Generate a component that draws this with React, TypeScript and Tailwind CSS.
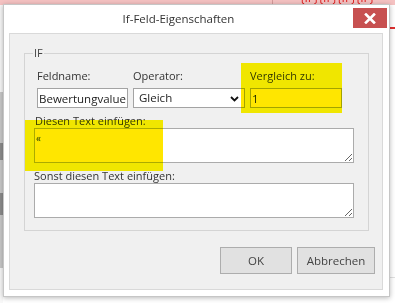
import React from "react";

function Chevron() {
  return (
    <svg width="9" height="6" viewBox="0 0 9 6" className="absolute right-[5px] top-[7px]">
      <path d="M1 1 L4.5 4.5 L8 1" fill="none" stroke="#111" strokeWidth="1.8" />
    </svg>
  );
}

export default function App() {
  return (
    <div className="relative w-[395px] h-[303px] overflow-hidden bg-white font-['Open_Sans','Noto_Sans',sans-serif] text-[#333]">
      {/* background page */}
      <div className="flex flex-col h-full">
        <div className="relative h-[5px] bg-[#f5c2c2]">
          <div className="absolute left-[272px] top-0 w-[1px] h-[5px] bg-[#d49a9a]" />
          <span className="absolute left-[300px] top-[-9px] text-[12px] leading-[14px] text-[#e02020] whitespace-nowrap">
            {"{IF}{IF}{IF}{IF}"}
          </span>
        </div>
        <div className="flex flex-1">
          <div className="w-[3px] flex flex-col">
            <div className="h-[87px] bg-[#f8f8f8]" />
            <div className="h-[51px] bg-[#c9c9c9]" />
            <div className="h-[17px] bg-[#8c8c8c]" />
            <div className="h-[33px] bg-[#c9c9c9]" />
            <div className="h-[22px] bg-[#8c8c8c]" />
            <div className="h-[53px] bg-[#c9c9c9]" />
            <div className="flex-1 bg-[#f8f8f8]" />
          </div>
          <div className="flex-1" />
          <div className="w-[5px] flex flex-col">
            <div className="h-[22px]" />
            <div className="h-[2px] bg-[#e03030]" />
            <div className="h-[248px]" />
            <div className="h-[1px] bg-[#e0e0e0]" />
          </div>
        </div>
      </div>

      {/* dialog */}
      <div className="absolute left-[3px] top-[4px] w-[387px] h-[293px] border border-[#c6c6c6] bg-white shadow-[0_1px_5px_rgba(0,0,0,0.28)] flex flex-col">
        <div className="h-[28px] flex items-start shrink-0">
          <div className="flex-1 h-full flex items-center justify-center text-[11.5px] text-[#333]">
            If-Feld-Eigenschaften
          </div>
          <div className="mt-[3px] mr-[2px] w-[34px] h-[20px] bg-[#c75050] flex items-center justify-center">
            <svg width="12" height="11" viewBox="0 0 12 11">
              <path d="M2 1.5 L10 9.5 M10 1.5 L2 9.5" stroke="white" strokeWidth="2.6" strokeLinecap="square" />
            </svg>
          </div>
        </div>

        <div className="ml-[5px] mr-[6px] h-[257px] border border-[#d9d9d9] bg-[#f0f0f0] flex flex-col shrink-0">
          {/* fieldset */}
          <div className="relative mt-[19px] ml-[14px] w-[345px] border border-[#d4d4d4] pt-[9px] pb-[12px] text-[11px]">
            <span className="absolute left-[8px] top-[-9px] px-[1px] bg-[#f0f0f0] leading-[16px] text-[11px] text-[#444]">
              IF
            </span>

            <div className="flex pl-[12px]">
              <div className="w-[91px] pt-[5px] flex flex-col">
                <div className="leading-[16px] h-[16px]">Feldname:</div>
                <input
                  readOnly
                  value="Bewertungvalue"
                  className="mt-[4px] w-[91px] h-[20px] border border-[#a3a3a3] bg-white pl-[1px] text-[11.5px] text-[#222] outline-none"
                />
              </div>
              <div className="ml-[5px] w-[112px] pt-[5px] flex flex-col">
                <div className="leading-[16px] h-[16px]">Operator:</div>
                <div className="relative mt-[4px] w-[112px] h-[20px] border border-[#a3a3a3] bg-white pl-[5px] text-[11.5px] leading-[18px] text-[#222]">
                  Gleich
                  <Chevron />
                </div>
              </div>
              <div className="ml-[5px] w-[92px] pt-[5px] flex flex-col">
                <div className="leading-[16px] h-[16px]">Vergleich zu:</div>
                <input
                  readOnly
                  value="1"
                  className="mt-[4px] w-[92px] h-[20px] border border-[#a3a3a3] bg-white pl-[1px] text-[11.5px] text-[#222] outline-none"
                />
              </div>
            </div>

            <div className="mt-[6px] ml-[10px] leading-[14px] h-[14px]">Diesen Text einfügen:</div>
            <textarea
              readOnly
              value="«"
              className="block ml-[9px] w-[320px] h-[35px] border border-[#ababab] bg-white px-[1px] pt-[3px] text-[10px] leading-[12px] text-[#222] outline-none"
            />

            <div className="mt-[6px] ml-[9px] leading-[14px] h-[14px]">Sonst diesen Text einfügen:</div>
            <textarea
              readOnly
              value=""
              className="block ml-[9px] w-[320px] h-[35px] border border-[#ababab] bg-white px-[1px] text-[11px] outline-none"
            />

            {/* yellow highlights */}
            <div className="absolute left-[216px] top-[9px] w-[101px] h-[50px] bg-[#ffe600] mix-blend-darken pointer-events-none" />
            <div className="absolute left-0 top-[66px] w-[138px] h-[51px] bg-[#ffe600] mix-blend-darken pointer-events-none" />
          </div>

          <div className="flex justify-end gap-[5px] mt-[16px] pr-[7px]">
            <div className="w-[72px] h-[27px] border border-[#adadad] bg-[#e1e1e1] flex items-center justify-center text-[11.5px] text-[#444]">
              OK
            </div>
            <div className="w-[78px] h-[27px] border border-[#adadad] bg-[#e1e1e1] flex items-center justify-center text-[11.5px] text-[#444]">
              Abbrechen
            </div>
          </div>
        </div>
      </div>
    </div>
  );
}
